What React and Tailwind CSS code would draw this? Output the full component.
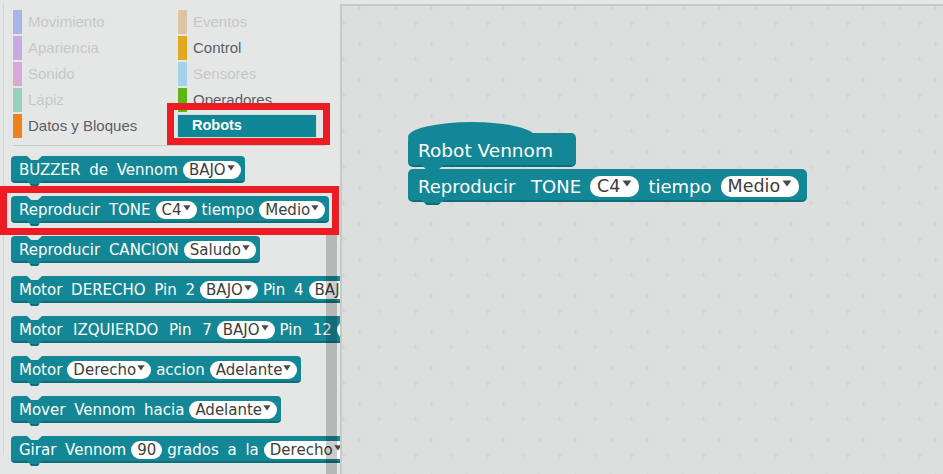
import React from "react";

const TAB_CLIP = "[clip-path:polygon(0_0,100%_0,72%_100%,28%_100%)]";

function Arrow({ big }) {
  return big ? (
    <svg width="10" height="7" viewBox="0 0 10 7" className="ml-[2px] -mt-[6px] shrink-0">
      <path d="M0.5 0.5 L9.5 0.5 L5 6.5 Z" fill="#4a4a4a" />
    </svg>
  ) : (
    <svg width="8" height="6" viewBox="0 0 8 6" className="ml-[1px] -mt-[5px] shrink-0">
      <path d="M0.3 0.3 L7.7 0.3 L4 5.5 Z" fill="#4a4a4a" />
    </svg>
  );
}

function Field({ children, arrow = true, big = false }) {
  return big ? (
    <span className="flex items-center h-[21px] rounded-[10px] bg-white pl-[7px] pr-[7px] text-[17.5px] text-[#3d3d3d] [word-spacing:0px] shrink-0">
      {children}
      {arrow && <Arrow big />}
    </span>
  ) : (
    <span
      className={
        "flex items-center h-[18px] rounded-[9px] bg-white text-[15px] text-[#3d3d3d] [word-spacing:0px] shrink-0 " +
        (arrow ? "pl-[6px] pr-[6px]" : "px-[6px]")
      }
    >
      {children}
      {arrow && <Arrow />}
    </span>
  );
}

function PBlock({ children, wide }) {
  return (
    <div
      className={
        "relative self-start flex items-center gap-[5px] h-[27px] shrink-0 pl-[8px] pr-[4px] pt-[3px] rounded-[4px] bg-[#138796] border-b-2 border-[#0e6f7b] text-white text-[15px] whitespace-nowrap " +
        (wide ? "[word-spacing:6px]" : "[word-spacing:4px]")
      }
    >
      <span className={"absolute top-0 left-[16px] w-[15px] h-[4px] bg-[#e5e7e7] " + TAB_CLIP} />
      {children}
      <span
        className={
          "absolute top-[calc(100%-1px)] left-[16px] w-[15px] h-[6px] bg-[#138796] border-b-2 border-[#0e6f7b] " +
          TAB_CLIP
        }
      />
    </div>
  );
}

const CATS = [
  ["Movimiento", "bg-[#aab5e6]", "text-[#c6c8c8]"],
  ["Eventos", "bg-[#dfc4a4]", "text-[#c6c8c8]"],
  ["Apariencia", "bg-[#c8aae2]", "text-[#c6c8c8]"],
  ["Control", "bg-[#e2a91e]", "text-[#5a5f66]"],
  ["Sonido", "bg-[#d9a9da]", "text-[#c6c8c8]"],
  ["Sensores", "bg-[#a4d2ea]", "text-[#c6c8c8]"],
  ["Lápiz", "bg-[#98d2bd]", "text-[#c6c8c8]"],
  ["Operadores", "bg-[#5cb712]", "text-[#5a5f66]"],
  ["Datos y Bloques", "bg-[#f0821e]", "text-[#5a5f66]"],
];

function Canvas() {
  return (
    <div className="relative flex-1 mt-[4px] border-t-2 border-l-2 border-[#c7c9c9] bg-[#dddede] overflow-hidden">
      <svg className="absolute inset-0 w-full h-full">
        <defs>
          <pattern id="grid" width="36" height="36" patternUnits="userSpaceOnUse" x="-5" y="-5">
            <path d="M20 7 H25 M22.5 4.5 V9.5 M4 22 H9 M6.5 19.5 V24.5" stroke="#d1d2d2" strokeWidth="1" />
          </pattern>
        </defs>
        <rect width="100%" height="100%" fill="url(#grid)" />
      </svg>

      <div className="absolute left-[66px] top-[127px] flex flex-col gap-[2px]">
        {/* hat block */}
        <div className="relative z-10 self-start">
          <div className="absolute left-0 top-[-11px] w-[127px] h-[30px] rounded-[50%] bg-[#138796]" />
          <div className="relative flex items-center h-[34px] w-[168px] pl-[10px] pt-[3px] rounded-tl-[8px] rounded-r-[5px] rounded-bl-[5px] bg-[#138796] border-b-2 border-[#0e6f7b] text-white text-[18.5px] whitespace-nowrap">
            Robot Vennom
            <span
              className={
                "absolute top-[calc(100%-1px)] left-[12px] w-[25px] h-[6px] bg-[#138796] " + TAB_CLIP
              }
            />
          </div>
        </div>
        {/* tone block */}
        <div className="relative self-start flex items-center gap-[9px] h-[33px] pl-[10px] pr-[8px] pt-[4px] rounded-[5px] bg-[#138796] border-b-2 border-[#0e6f7b] text-white text-[18px] whitespace-nowrap [word-spacing:10px]">
          <span>Reproducir TONE</span>
          <Field big>C4</Field>
          <span>tiempo</span>
          <Field big>Medio</Field>
          <span
            className={
              "absolute top-[calc(100%-1px)] left-[12px] w-[25px] h-[6px] bg-[#138796] border-b-2 border-[#0e6f7b] " +
              TAB_CLIP
            }
          />
        </div>
      </div>
    </div>
  );
}

export default function App() {
  return (
    <div className="w-[943px] h-[474px] flex bg-[#e5e7e7] overflow-hidden [font-family:'DejaVu_Sans',sans-serif]">
      <div className="relative w-[340px] h-full shrink-0 overflow-hidden">
        <div className="absolute left-[3px] top-[3px] h-[452px] w-px bg-[#d4d6d6]" />

        <div className="pt-[10px] pl-[13px] grid grid-cols-[165px_1fr] gap-y-[2px] [font-family:'Liberation_Sans',Arial,sans-serif] text-[15px]">
          {CATS.map(([name, bar, txt]) => (
            <div key={name} className="flex items-center gap-[6px] h-[24px]">
              <span className={"w-[9px] h-full " + bar} />
              <span className={txt}>{name}</span>
            </div>
          ))}
          <div className="flex items-center h-[24px] -ml-[1px] w-[140px] pl-[14px] bg-[#0f8796] border border-[#cfe0e1] text-white font-bold text-[14.5px]">
            Robots
          </div>
        </div>

        <div className="mt-[7px] ml-[13px] w-[313px] h-px bg-[#c9cbcb]" />

        <div className="mt-[10px] pl-[11px] flex flex-col gap-[13px]">
          <PBlock>
            <span>BUZZER de Vennom</span>
            <Field>BAJO</Field>
          </PBlock>
          <PBlock>
            <span>Reproducir TONE</span>
            <Field>C4</Field>
            <span>tiempo</span>
            <Field>Medio</Field>
          </PBlock>
          <PBlock>
            <span>Reproducir CANCION</span>
            <Field>Saludo</Field>
          </PBlock>
          <PBlock>
            <span>Motor DERECHO Pin 2</span>
            <Field>BAJO</Field>
            <span>Pin 4</span>
            <Field>BAJO</Field>
          </PBlock>
          <PBlock wide>
            <span>Motor IZQUIERDO Pin 7</span>
            <Field>BAJO</Field>
            <span>Pin 12</span>
            <Field>BAJO</Field>
          </PBlock>
          <PBlock>
            <span>Motor</span>
            <Field>Derecho</Field>
            <span>accion</span>
            <Field>Adelante</Field>
          </PBlock>
          <PBlock>
            <span>Mover Vennom hacia</span>
            <Field>Adelante</Field>
          </PBlock>
          <PBlock>
            <span>Girar Vennom</span>
            <Field arrow={false}>90</Field>
            <span>grados a la</span>
            <Field>Derecho</Field>
          </PBlock>
        </div>

        {/* scrollbar */}
        <div className="absolute left-[326px] top-[232px] w-[11px] h-[250px] rounded-[2px] bg-black/20" />

        {/* red highlights */}
        <div className="absolute left-[167px] top-[103px] w-[163px] h-[42px] border-[7px] border-[#ec1c24]" />
        <div className="absolute left-0 top-[186px] w-[339px] h-[49px] border-[7px] border-[#ec1c24]" />
      </div>
      <Canvas />
    </div>
  );
}
